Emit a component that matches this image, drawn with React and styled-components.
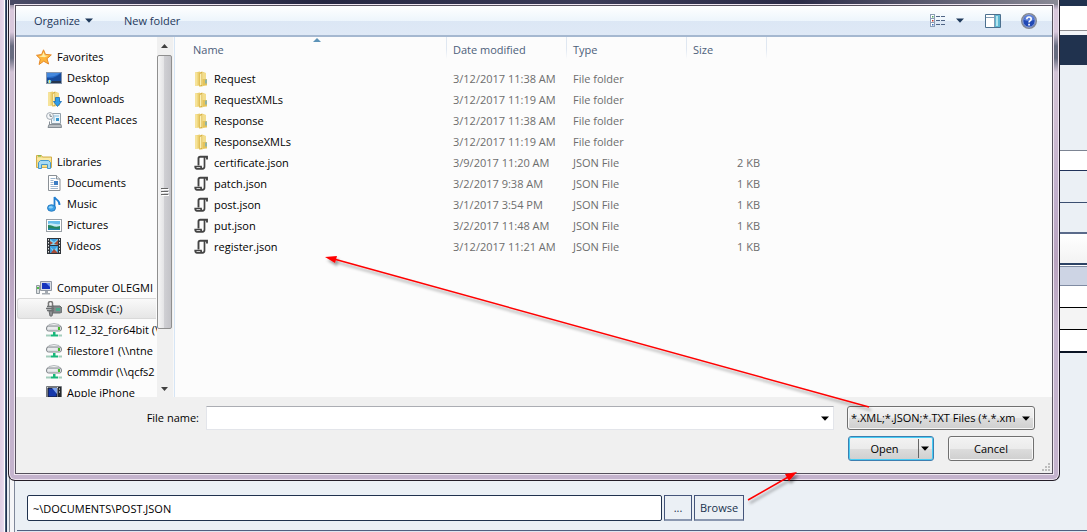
import React from 'react';
import styled, { createGlobalStyle, css } from 'styled-components';

const Global = createGlobalStyle`
  *, *::before, *::after { box-sizing: border-box; }
  body { margin: 0; background: #ebf0f5; overflow: hidden; }
  body, button, input, select, table {
    font-family: "Open Sans", "Noto Sans", sans-serif;
    font-size: 11px;
    line-height: 16px;
    color: #000;
  }
  button, input, select { margin: 0; padding: 0; border-radius: 0; outline: none; }
  ul { list-style: none; margin: 0; padding: 0; }
  a { color: inherit; text-decoration: none; }
  svg { display: block; flex: none; }
`;

/* ---------- page behind the dialog ---------- */

const Desktop = styled.div`
  position: relative;
  display: flex;
  min-height: 100vh;
  overflow: hidden;
`;

const WindowEdge = styled.div`
  flex: none;
  width: 15px;
  background: linear-gradient(90deg, #e0cfe4 0 1px, #e9dbee 4px, #fff 4px 5px, #4a5c78 5px 6px, #20324e 6px 7px, #e8ecf2 7px 9px, #8a8f9a 9px 10px, #f6f6f8 10px 14px, #80889a 14px 15px);
`;

const Page = styled.main`
  flex: 1;
  min-width: 0;
  display: flex;
  flex-direction: column;
`;

const Band = styled.div`
  flex: none;
  height: ${(p) => p.$h + (p.$line || 0)}px;
  background: ${(p) => p.$bg};
  border-bottom: ${(p) => p.$line || 0}px solid ${(p) => p.$color || 'transparent'};
`;

const bands = [
  [6, '#20324e'],
  [24, '#fff', 1, '#8c8c90'],
  [4, '#f3f5f8'],
  [30, '#20324e'],
  [85, '#ebf0f5', 1, '#7d8593'],
  [19, '#fff', 1, '#20325a'],
  [31, '#ebf0f5', 1, '#3b4f70'],
  [29, '#ebf0f5', 2, '#5a6a8a'],
  [29, 'linear-gradient(#fff, #f3f3f3)', 2, '#2c4264'],
  [1, '#fff', 1, '#7f8ba2'],
  [18, '#cdd4e4', 1, '#7f8ba2'],
  [21, '#fff', 1, '#000'],
  [21, '#f4f4f4', 1, '#000'],
  [21, '#fff', 2, '#0a1424'],
];

const PathForm = styled.form`
  display: flex;
  gap: 2px;
  margin: 142px 12px 9px;
`;

const PathInput = styled.input`
  width: 635px;
  height: 26px;
  padding: 0 5px;
  border: 1px solid #20324e;
  border-radius: 2px;
  background: #fff;
`;

const PathButton = styled.button`
  width: ${(p) => p.$w}px;
  height: 26px;
  border: 1px solid #44557a;
  border-bottom: 2px solid #8b98b0;
  background: #ebf0f5;
  color: #20324e;
`;

const NextPanel = styled.div`
  flex: 1;
  min-height: 2px;
  margin-left: 2px;
  border-top: 1px solid #4f6080;
  background: #dfe5ef;
`;

/* ---------- dialog ---------- */

const DialogFrame = styled.section`
  position: absolute;
  top: 0;
  left: 8px;
  right: 27px;
  padding: 5px 6px 6px;
  border: 1px solid #221c26;
  border-top: 0;
  border-radius: 0 0 7px 7px;
  background:
    linear-gradient(90deg, #4a4b66, #262742 30%, #3c3c58 55%, #2b2b47 75%, #8a8a96) top / 100% 5px no-repeat,
    linear-gradient(#5d5f74, #d9c8dc 10px 32px, #686c80 46px 58px, #d2c3d6 72px, #cfbdd2 120px, #c0aecb 200px, #b9a3bf 260px, #c4b3cd 330px, #c4b3cd);
  box-shadow: inset 1px 0 #eee4f0, inset -1px 0 #eee4f0, inset 0 -1px #eee4f0;
`;

const DialogInner = styled.div`
  border: 1px solid #55505c;
  box-shadow: 0 0 0 1px #efe6f1;
  background: #f0f0f0;
`;

const Toolbar = styled.header`
  display: flex;
  align-items: center;
  height: 31px;
  padding: 0 15px 0 18px;
  border-bottom: 2px solid #a5b8d0;
  background: linear-gradient(#fff, #edf5fc 15px, #dce7f5 15px, #dfe9f6);
`;

const ToolButton = styled.button`
  display: flex;
  align-items: center;
  gap: 5px;
  margin-right: ${(p) => p.$after || 0}px;
  border: 0;
  background: none;
  color: #1e395b;
`;

const Spacer = styled.div`
  flex: 1;
`;

const Body = styled.div`
  display: flex;
  height: 360px;
  background: #fcfcfc;
`;

const Nav = styled.nav`
  flex: none;
  width: 141px;
  padding: 9px 1px 0;
  overflow: hidden;
`;

const NavGroup = styled.ul`
  margin-bottom: 21px;
`;

const NavLink = styled.a`
  display: flex;
  align-items: center;
  gap: 5px;
  height: 21px;
  padding-left: ${(p) => (p.$root ? 18 : 28)}px;
  border: 1px solid transparent;
  white-space: nowrap;
  ${(p) =>
    p.$selected &&
    css`
      border-color: #d9d9d9;
      border-right: 0;
      border-radius: 3px 0 0 3px;
      background: linear-gradient(#f9f9f9, #e6e6e6);
    `}
`;

const ScrollTrack = styled.div`
  flex: none;
  display: flex;
  flex-direction: column;
  align-items: center;
  width: 17px;
  padding: 7px 1px 6px 0;
  background: #f0f0f0;
  border-right: 1px solid #f8f8f8;
`;

const ScrollThumb = styled.div`
  display: flex;
  align-items: center;
  justify-content: center;
  align-self: stretch;
  height: 274px;
  margin: 7px 0 auto;
  border: 1px solid #8f8f8f;
  border-radius: 2px;
  background: linear-gradient(90deg, #f6f6f6, #e4e4e6 45%, #cfcfd3 50%, #c3c3c8);
`;

const ListPane = styled.div`
  flex: 1;
  min-width: 0;
  padding-left: 12px;
  border-left: 1px solid #d6e5f5;
`;

const Files = styled.table`
  table-layout: fixed;
  width: 580px;
  border-collapse: collapse;
`;

const Head = styled.th`
  position: relative;
  width: ${(p) => p.$w}px;
  height: 31px;
  padding: 0 0 6px 6px;
  text-align: left;
  font-weight: 400;
  color: #4c607a;
  background: linear-gradient(#dfe7f1, #dfe7f1 12px, #fcfcfc 22px) right top / 1px 100% no-repeat;
`;

const SortMark = styled.svg`
  position: absolute;
  top: 1px;
  left: 126px;
`;

const Cell = styled.td`
  height: 21px;
  padding: 0 7px 0 6px;
  color: #6d6d6d;
  text-align: ${(p) => (p.$end ? 'right' : 'left')};
  white-space: nowrap;
`;

const FileName = styled.span`
  display: flex;
  align-items: center;
  gap: 5px;
  color: #000;
`;

const Footer = styled.footer`
  position: relative;
  display: flex;
  gap: 13px;
  height: 76px;
  padding: 9px 17px 12px;
`;

const NameField = styled.div`
  flex: 1;
  display: flex;
  gap: 6px;
  height: 24px;
`;

const NameLabel = styled.label`
  width: 166px;
  line-height: 24px;
  padding-left: 2px;
  text-align: right;
  margin-right: 1px;
`;

const Combo = styled.div`
  flex: 1;
  display: flex;
  align-items: center;
  padding-right: 4px;
  border: 1px solid #e3e5ea;
  border-top-color: #abadb3;
  background: #fff;
`;

const NameInput = styled.input`
  flex: 1;
  min-width: 0;
  height: 20px;
  padding: 0 4px;
  border: 0;
  background: transparent;
`;

const Actions = styled.div`
  width: 188px;
  display: flex;
  flex-direction: column;
  gap: 6px;
`;

const face = css`
  border: 1px solid #707070;
  border-radius: 3px;
  background: linear-gradient(#f3f3f3, #ebebeb 50%, #dddddd 50%, #cfcfcf);
  box-shadow: inset 0 0 0 1px #f8f8f8;
`;

const TypeBox = styled.div`
  ${face}
  display: flex;
  align-items: center;
  height: 24px;
  padding: 0 4px 0 3px;
`;

const TypeSelect = styled.select`
  flex: 1;
  min-width: 0;
  height: 20px;
  margin-right: 7px;
  border: 0;
  background: transparent;
  appearance: none;
  overflow: hidden;
  text-overflow: clip;
`;

const ButtonRow = styled.div`
  display: flex;
  justify-content: space-between;
  padding: 0 1px;
`;

const CancelButton = styled.button`
  ${face}
  width: 86px;
  height: 25px;
`;

const SplitButton = styled.div`
  ${face}
  display: flex;
  width: 86px;
  height: 25px;
  padding: 2px;
  border-color: #3c7fb1;
  box-shadow: inset 0 0 0 1px #48cdf4;
`;

const SplitPart = styled.button`
  display: flex;
  align-items: center;
  justify-content: center;
  ${(p) => (p.$menu ? 'width: 13px;' : 'flex: 1;')}
  border: 0 solid #666;
  border-left-width: ${(p) => (p.$menu ? 1 : 0)}px;
  background: transparent;
`;

const Grip = styled.svg`
  position: absolute;
  right: 2px;
  bottom: 2px;
`;

const Annotations = styled.svg`
  position: absolute;
  top: 0;
  left: 0;
  pointer-events: none;
`;

/* ---------- drawings ---------- */

const Caret = ({ w = 8, color = '#000' }) => (
  <svg width={w} height="5" viewBox="0 0 8 5" aria-hidden="true">
    <path d="M0 0.5h8L4 4.8z" fill={color} />
  </svg>
);

const Icon = ({ children }) => (
  <svg width="16" height="16" viewBox="0 0 16 16" aria-hidden="true">{children}</svg>
);

const StarIcon = () => (
  <Icon>
    <path d="M7.5.8l2 4.6 5.8.5-4.3 3.8 1.6 5.3-4.9-2.8-4.6 3.3 1.2-5.5L.5 6.3l5.1-.8z" fill="#fdb53b" stroke="#e58a2c" />
    <path d="M7.5 3l1.3 3.4 3.6.3-4 1.5-5.5-.8 3.3-.9z" fill="#fff0a8" />
  </Icon>
);

const DesktopIcon = () => (
  <Icon>
    <rect x=".5" y="2.5" width="15" height="11" fill="#2668c4" stroke="#8696ad" />
    <path d="M1 8C6 9 11 7 15 3v8H1z" fill="#174b9c" />
    <path d="M1 3h13C10 6 6 7 1 7z" fill="#4488dd" />
    <path d="M1 11h14v2H1z" fill="#26364e" />
    <circle cx="3.5" cy="11.5" r="1.8" fill="#72d4e5" />
    <path d="M3 10h1v3H3z" fill="#f3e472" />
  </Icon>
);

const FolderShape = () => (
  <g>
    <path d="M2 1.5L7 .5v14L2 15z" fill="#ecd06e" />
    <path d="M2 1.500h2.500V15H2z" fill="#f6e39a" />
    <path d="M6 2l3-1.500L13 2v12l-4 1.500H6z" fill="#ecd27a" />
    <path d="M6.500 2L9 .8V15l-2.500.3z" fill="#d5ad3f" />
    <path d="M7 3l1.500-1v12L7 14.500z" fill="#fbf0b8" />
    <path d="M9.500 2H13v12H9.500z" fill="#f3dd8c" />
    <path d="M9.500 8H14v6.500H9.500z" fill="#e5c45a" />
  </g>
);

const FolderIcon = () => (
  <Icon>
    <FolderShape />
    <path d="M13 8.500v4" stroke="#5aa9d6" strokeWidth="1.200" />
  </Icon>
);

const DownloadsIcon = () => (
  <Icon>
    <FolderShape />
    <path d="M9.5 6.5h4v4h2l-4 5-4-5h2z" fill="#2f9ce9" stroke="#156db9" strokeWidth=".8" />
  </Icon>
);

const RecentIcon = () => (
  <Icon>
    <path d="M5.5 1.5h9v10h-9z" fill="#eef6fb" stroke="#93a0aa" />
    <path d="M7 4h6M7 6h2M7 8h2" stroke="#83b8d8" />
    <path d="M10 6h3v3h-3z" fill="#3998cf" />
    <path d="M3.5 9.5v3M3 12.5h12l.5 3H2z" fill="#b8bdc1" stroke="#858d94" />
    <circle cx="4" cy="4" r="3.4" fill="#f6f8fa" stroke="#a3abb3" />
    <path d="M4 2v2.3h2" fill="none" stroke="#59646e" strokeWidth=".8" />
  </Icon>
);

const LibrariesIcon = () => (
  <Icon>
    <path d="M.5 13.5V1.5h5l1 1.5h9v10.5z" fill="#f4df8b" stroke="#d3af4b" />
    <path d="M2 2h3" stroke="#57b947" />
    <path d="M1 5h14" stroke="#fff4bf" />
    <path d="M2.5 14.5v-6l2-2h8l2 2v6h-3v-4h-6v4z" fill="#a6daf4" stroke="#4597cb" />
  </Icon>
);

const DocumentsIcon = () => (
  <Icon>
    <path d="M2.5.5h8l3.500 3.500v11.500H2.500z" fill="#fff" stroke="#8a9096" />
    <path d="M10.500.500v3.500H14" fill="#e8edf1" stroke="#8a9096" />
    <path d="M4.500 3.500h5M4.500 5.500h3M4.500 7.500h3M4.500 9.500h3M4.500 11.500h7.500M4.500 13.500h7.500" stroke="#9bb5cf" />
    <path d="M8 6h4v4H8z" fill="#3a7dc4" />
  </Icon>
);

const MusicIcon = () => (
  <Icon>
    <path d="M8.500 12V1c1 3 5.500 3 5 8" fill="none" stroke="#207ed1" strokeWidth="1.800" />
    <ellipse cx="5.500" cy="12" rx="4" ry="3.300" fill="#3da1e8" stroke="#196fb8" strokeWidth=".8" />
    <ellipse cx="4.800" cy="11.200" rx="2" ry="1.200" fill="#8bd0f8" />
  </Icon>
);

const PicturesIcon = () => (
  <Icon>
    <rect x=".5" y="2.500" width="15" height="12" fill="#fff" stroke="#9aa0a6" />
    <path d="M2 4h12v9H2z" fill="#68bdea" />
    <path d="M2 7c4-2 6 1 12 0v3H2z" fill="#c6eaf8" />
    <path d="M2 8c5 0 6 3 12 1v4H2z" fill="#26855b" />
    <path d="M2 11.500c4-1 8 1 12 0V13H2z" fill="#2384a8" />
  </Icon>
);

const VideosIcon = () => (
  <Icon>
    <path d="M1 0h14v16H1z" fill="#30343a" />
    <path d="M4 1h8v6H4zM4 8h8v7H4z" fill="#3c9ddd" />
    <path d="M4 1l4 3 4-3v6H4zM4 9l4 3 3-3v6H8z" fill="#7fd0f3" />
    <path d="M4 3l3 2-3 2zM12 2L8 6l4 1zM5 15l3-4 4 4z" fill="#a64a36" />
    <path d="M2.500 1v15M13.500 1v15" stroke="#e6e6e6" strokeDasharray="1.500 1.500" />
  </Icon>
);

const ComputerIcon = () => (
  <Icon>
    <path d="M.5 5.500h3v8h-3z" fill="#dce0e2" stroke="#91999f" />
    <path d="M1 7h2v2H1z" fill="#4fbd46" />
    <path d="M4.500 1.500h11v9h-11z" fill="#d8dce3" stroke="#9097a3" />
    <path d="M6 3h8v6H6z" fill="#1534bd" />
    <path d="M10 3h4v4z" fill="#6d91f0" />
    <path d="M9 11h3v2H9zM6 13h8v1.500H6z" fill="#a5abb2" />
  </Icon>
);

const DiskIcon = () => (
  <Icon>
    <path d="M6 5h8l2 2v4l-2 1H6z" fill="#82888a" stroke="#676c6e" />
    <path d="M10 7h4v3h-4z" fill="#48a88b" />
    <path d="M2.500 6V3a2 2 0 014-1v3" fill="none" stroke="#777" strokeWidth="1.500" />
    <path d="M1 5.500h7M0 7.500h8M1 9.500h7" stroke="#6d7072" strokeWidth="1.500" />
    <path d="M3 10h4l-1 5H4z" fill="#8e9193" stroke="#696c6e" />
  </Icon>
);

const NetDriveIcon = () => (
  <Icon>
    <path d="M3 2.500q5-2 10 0l2 2H1z" fill="#f2f3f4" stroke="#b4b8bc" />
    <rect x=".5" y="4" width="15" height="5" rx="2" fill="#dcdfe2" stroke="#84898e" />
    <path d="M2 6h9" stroke="#f8f8f8" />
    <path d="M12 5h2v3h-2z" fill="#44b82c" />
    <path d="M7 10h2.500v2.500H12v2H4.500v-2H7z" fill="#18b77a" />
    <path d="M0 13.500h4M12.500 13.500H16" stroke="#a3cdbc" strokeWidth="2" />
  </Icon>
);

const PhoneIcon = () => (
  <Icon>
    <path d="M.5 1.500h15v12H.5z" fill="#d7d9dc" stroke="#75797e" />
    <path d="M2 3h9v9H2z" fill="#1638aa" stroke="#16191e" />
    <path d="M6 3h5v6z" fill="#7fa5ed" />
    <path d="M12 2h3v11h-3z" fill="#25282c" />
    <path d="M13 4h1M13 7h1" stroke="#fff" />
  </Icon>
);

const ScriptIcon = () => (
  <Icon>
    <path d="M5.500 10.500V3.500q0-1.700 1.700-1.700H14v2.700" fill="none" stroke="#444" strokeWidth="1.900" />
    <path d="M11.500 2v9.500q0 2.300-2 2.300H4q-1.800 0-1.800-2.300H8q0 2.300 1.500 2.300" fill="none" stroke="#444" strokeWidth="1.700" />
  </Icon>
);

const ViewsIcon = () => (
  <svg width="16" height="14" viewBox="0 0 16 14" aria-hidden="true">
    {['#4ea65b', '#c33a2e', '#356ac0'].map((c, i) => (
      <g key={c} transform={`translate(0 ${i * 4})`}>
        <rect x=".5" y=".5" width="4" height="4" fill="#fff" stroke="#8b9db5" />
        <path d="M2 2h1.500v1.500H2z" fill={c} />
        <path d="M6 2.500h4M11 2.500h4" stroke="#4f6485" />
      </g>
    ))}
  </svg>
);

const PreviewIcon = () => (
  <svg width="16" height="14" viewBox="0 0 16 14" aria-hidden="true">
    <path d="M.5.5h15v13H.5z" fill="#fff" stroke="#4c708f" />
    <path d="M1 3.500h9M9.500 1v12" stroke="#829db5" />
    <path d="M10 1h5v12h-5z" fill="#5fb7d2" />
    <path d="M11 2h2v10h-2z" fill="#b4e5ef" />
  </svg>
);

const HelpIcon = () => (
  <Icon>
    <circle cx="8" cy="8" r="7.300" fill="#2149b5" stroke="#858991" strokeWidth="1.400" />
    <circle cx="8" cy="8" r="6.200" fill="none" stroke="#d0d6e5" strokeWidth=".7" />
    <path d="M3 7a5 5 0 0110 0q-5 2-10 0" fill="#5b80dc" />
    <path d="M5.800 6.200q0-2.200 2.200-2.200t2.200 2q0 1.200-1.200 1.900-1 .6-1 1.600" fill="none" stroke="#fff" strokeWidth="1.600" />
    <path d="M7.200 10.800h1.700v1.600H7.200z" fill="#fff" />
  </Icon>
);

/* ---------- data ---------- */

const groups = [
  ['Favorites', StarIcon, [['Desktop', DesktopIcon], ['Downloads', DownloadsIcon], ['Recent Places', RecentIcon]]],
  ['Libraries', LibrariesIcon, [['Documents', DocumentsIcon], ['Music', MusicIcon], ['Pictures', PicturesIcon], ['Videos', VideosIcon]]],
  ['Computer OLEGMI', ComputerIcon, [
    ['OSDisk (C:)', DiskIcon, true],
    ['112_32_for64bit (\\\\', NetDriveIcon],
    ['filestore1 (\\\\ntne', NetDriveIcon],
    ['commdir (\\\\qcfs2', NetDriveIcon],
    ['Apple iPhone', PhoneIcon],
  ]],
];

const files = [
  ['Request', '3/12/2017 11:38 AM'],
  ['RequestXMLs', '3/12/2017 11:19 AM'],
  ['Response', '3/12/2017 11:38 AM'],
  ['ResponseXMLs', '3/12/2017 11:19 AM'],
  ['certificate.json', '3/9/2017 11:20 AM', '2 KB'],
  ['patch.json', '3/2/2017 9:38 AM', '1 KB'],
  ['post.json', '3/1/2017 3:54 PM', '1 KB'],
  ['put.json', '3/2/2017 11:48 AM', '1 KB'],
  ['register.json', '3/12/2017 11:21 AM', '1 KB'],
];

function Navigation() {
  return (
    <Nav aria-label="Places">
      {groups.map(([title, RootIcon, items]) => (
        <NavGroup key={title}>
          <li><NavLink href="#" $root><RootIcon />{title}</NavLink></li>
          {items.map(([name, ItemIcon, selected]) => (
            <li key={name}>
              <NavLink href="#" $selected={selected}><ItemIcon />{name}</NavLink>
            </li>
          ))}
        </NavGroup>
      ))}
    </Nav>
  );
}

function Scrollbar() {
  return (
    <ScrollTrack aria-hidden="true">
      <svg width="7" height="4" viewBox="0 0 7 4"><path d="M0 4L3.500 0 7 4z" fill="#404040" /></svg>
      <ScrollThumb>
        <svg width="8" height="8" viewBox="0 0 8 8">
          <path d="M0 .5h7M0 3.500h7M0 6.500h7" stroke="#666" />
          <path d="M1 1.500h7M1 4.500h7M1 7.500h7" stroke="#fff" />
        </svg>
      </ScrollThumb>
      <svg width="7" height="4" viewBox="0 0 7 4"><path d="M0 0h7L3.500 4z" fill="#404040" /></svg>
    </ScrollTrack>
  );
}

function FileTable() {
  return (
    <Files>
      <thead>
        <tr>
          <Head $w={260}>
            Name
            <SortMark width="8" height="4" viewBox="0 0 8 4" aria-hidden="true">
              <path d="M0 4L4 0l4 4z" fill="#5d93b8" />
            </SortMark>
          </Head>
          <Head $w={120}>Date modified</Head>
          <Head $w={120}>Type</Head>
          <Head $w={80}>Size</Head>
        </tr>
      </thead>
      <tbody>
        {files.map(([name, date, size]) => (
          <tr key={name}>
            <Cell><FileName>{size ? <ScriptIcon /> : <FolderIcon />}{name}</FileName></Cell>
            <Cell>{date}</Cell>
            <Cell>{size ? 'JSON File' : 'File folder'}</Cell>
            <Cell $end>{size}</Cell>
          </tr>
        ))}
      </tbody>
    </Files>
  );
}

function OpenDialog() {
  return (
    <DialogFrame role="dialog" aria-label="Open">
      <DialogInner>
        <Toolbar>
          <ToolButton $after={31}>Organize <Caret color="#1e395b" /></ToolButton>
          <ToolButton>New folder</ToolButton>
          <Spacer />
          <ToolButton $after={10} aria-label="Views"><ViewsIcon /></ToolButton>
          <ToolButton $after={21} aria-label="More views"><Caret color="#1e395b" /></ToolButton>
          <ToolButton $after={20} aria-label="Preview pane"><PreviewIcon /></ToolButton>
          <ToolButton aria-label="Help"><HelpIcon /></ToolButton>
        </Toolbar>
        <Body>
          <Navigation />
          <Scrollbar />
          <ListPane><FileTable /></ListPane>
        </Body>
        <Footer>
          <NameField>
            <NameLabel htmlFor="file-name">File name:</NameLabel>
            <Combo>
              <NameInput id="file-name" />
              <Caret />
            </Combo>
          </NameField>
          <Actions>
            <TypeBox>
              <TypeSelect aria-label="File type">
                <option>*.XML;*.JSON;*.TXT Files (*.*.xml)</option>
              </TypeSelect>
              <Caret />
            </TypeBox>
            <ButtonRow>
              <SplitButton>
                <SplitPart>Open</SplitPart>
                <SplitPart $menu aria-label="Open options"><Caret /></SplitPart>
              </SplitButton>
              <CancelButton>Cancel</CancelButton>
            </ButtonRow>
          </Actions>
          <Grip width="8" height="8" viewBox="0 0 8 8" aria-hidden="true">
            <path d="M6 0h2v2H6zM3 3h2v2H3zM6 3h2v2H6zM0 6h2v2H0zM3 6h2v2H3zM6 6h2v2H6z" fill="#bdbdbd" />
          </Grip>
        </Footer>
      </DialogInner>
    </DialogFrame>
  );
}

export default function App() {
  return (
    <>
      <Global />
      <Desktop>
        <WindowEdge />
        <Page>
          {bands.map(([h, bg, line, color], i) => (
            <Band key={i} $h={h} $bg={bg} $line={line} $color={color} />
          ))}
          <PathForm>
            <PathInput aria-label="File path" defaultValue="~\DOCUMENTS\POST.JSON" />
            <PathButton type="button" $w={28}>...</PathButton>
            <PathButton type="button" $w={50}>Browse</PathButton>
          </PathForm>
          <NextPanel />
        </Page>
        <OpenDialog />
        <Annotations width="1087" height="532" viewBox="0 0 1087 532" aria-hidden="true">
          <defs>
            <filter id="soft" x="-10%" y="-10%" width="120%" height="130%">
              <feDropShadow dx="2" dy="3" stdDeviation="1.500" floodColor="#000" floodOpacity=".4" />
            </filter>
          </defs>
          <g filter="url(#soft)" fill="#f00" stroke="#f00">
            <path d="M869 407L334 259" strokeWidth="1.500" />
            <path d="M325 257l12-1-2 7z" stroke="none" />
            <path d="M748 500l42-24" strokeWidth="1.500" />
            <path d="M797 472l-8 9-4-7z" stroke="none" />
          </g>
        </Annotations>
      </Desktop>
    </>
  );
}
